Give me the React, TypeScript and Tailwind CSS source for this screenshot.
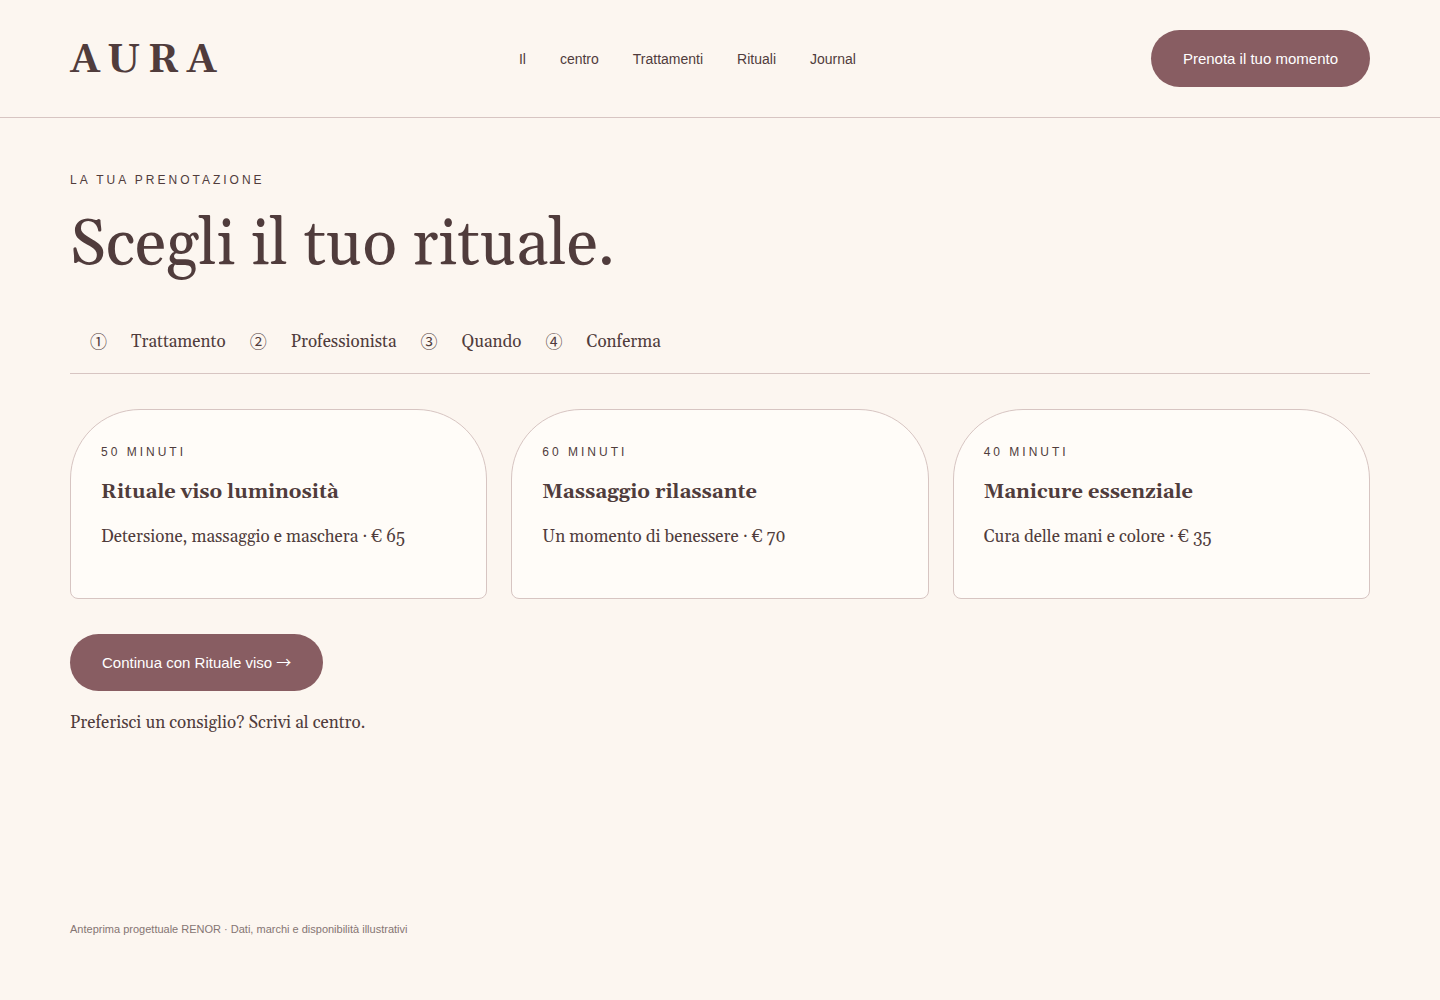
const navLinks = ['Il', 'centro', 'Trattamenti', 'Rituali', 'Journal']

const steps = [
  { mark: '①', label: 'Trattamento' },
  { mark: '②', label: 'Professionista' },
  { mark: '③', label: 'Quando' },
  { mark: '④', label: 'Conferma' },
]

const rituals = [
  { duration: '50 MINUTI', title: 'Rituale viso luminosità', text: 'Detersione, massaggio e maschera · € 65' },
  { duration: '60 MINUTI', title: 'Massaggio rilassante', text: 'Un momento di benessere · € 70' },
  { duration: '40 MINUTI', title: 'Manicure essenziale', text: 'Cura delle mani e colore · € 35' },
]

const serif = "font-[Georgia,Gelasio,'Liberation_Serif',serif]"
const sans = "font-[Arial,'Liberation_Sans',sans-serif]"
const symbols = "font-['Noto_Sans_CJK_JP',sans-serif]"

function Header() {
  return (
    <header className="flex items-center justify-between border-b border-[#d7c5c2] px-[70px] py-[30px]">
      <a href="#" className="pt-1 text-[40px] leading-[52px] font-bold tracking-[7px]">AURA</a>
      <nav className={`flex gap-[34px] text-sm ${sans}`}>
        {navLinks.map((link) => (
          <a key={link} href="#">{link}</a>
        ))}
      </nav>
      <button type="button" className={`rounded-full bg-[#885d62] px-8 py-4 text-[15px] leading-[25px] text-white ${sans}`}>
        Prenota il tuo momento
      </button>
    </header>
  )
}

export default function App() {
  return (
    <div className={`min-h-screen bg-[#fcf6f0] text-[17px] leading-[27px] text-[#503c3c] ${serif}`}>
      <Header />
      <main className="px-[70px] pt-[52px]">
        <p className={`text-xs leading-5 tracking-[3px] ${sans}`}>LA TUA PRENOTAZIONE</p>
        <h1 className="mt-5 text-[64px] leading-[72px]">Scegli il tuo rituale.</h1>
        <ol className="mt-[47px] flex gap-6 border-b border-[#d7c5c2] px-5 pb-[17px]">
          {steps.map((step) => (
            <li key={step.label} className="flex gap-6">
              <span className={`leading-6 ${symbols}`}>{step.mark}</span>
              <span>{step.label}</span>
            </li>
          ))}
        </ol>
        <div className="mt-[35px] grid grid-cols-3 gap-6">
          {rituals.map((ritual) => (
            <article key={ritual.title} className="min-h-[190px] rounded-t-[70px] rounded-b-lg border border-[#d7c5c2] bg-[#fffcf8] px-[30px] pt-8">
              <p className={`text-xs leading-5 tracking-[3px] ${sans}`}>{ritual.duration}</p>
              <h2 className="mt-3.5 text-xl leading-8 font-bold">{ritual.title}</h2>
              <p className="mt-4">{ritual.text}</p>
            </article>
          ))}
        </div>
        <button type="button" className={`mt-[35px] rounded-full bg-[#885d62] px-8 py-4 text-[15px] leading-[25px] text-white ${sans}`}>
          Continua con Rituale viso <span className={`leading-none ${symbols}`}>→</span>
        </button>
        <p className="mt-[19px]">Preferisci un consiglio? Scrivi al centro.</p>
      </main>
      <footer className={`px-[70px] pt-[182px] pb-[60px] text-[11px] leading-5 text-[#857573] ${sans}`}>
        Anteprima progettuale RENOR · Dati, marchi e disponibilità illustrativi
      </footer>
    </div>
  )
}
